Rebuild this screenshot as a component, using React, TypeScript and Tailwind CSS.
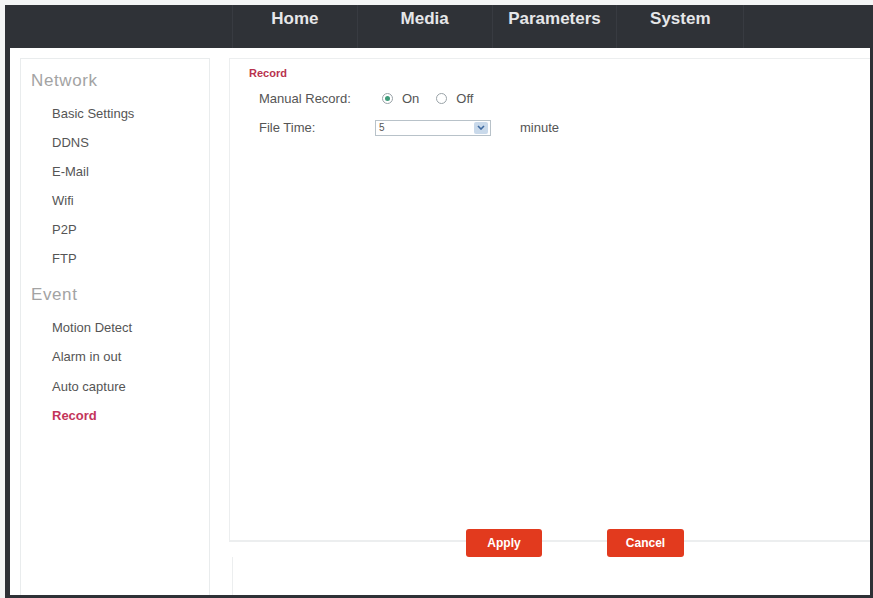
const navItems = [
  { label: 'Home', w: 'w-[126px]' },
  { label: 'Media', w: 'w-[136px]' },
  { label: 'Parameters', w: 'w-[126px]' },
  { label: 'System', w: 'w-[128px]' },
];

const networkItems = ['Basic Settings', 'DDNS', 'E-Mail', 'Wifi', 'P2P', 'FTP'];
const eventItems = ['Motion Detect', 'Alarm in out', 'Auto capture', 'Record'];

function Radio({ checked }: { checked?: boolean }) {
  return (
    <span className="flex h-[11px] w-[11px] items-center justify-center rounded-full border border-[#9aa3a8] bg-white">
      {checked && <span className="h-[5px] w-[5px] rounded-full bg-[#3f9c7a]" />}
    </span>
  );
}

export default function App() {
  return (
    <div
      className="h-[598px] w-[873px] overflow-hidden bg-[#f4f5f5] pt-[5px]"
      style={{ fontFamily: '"Liberation Sans", Arial, sans-serif' }}
    >
      <div className="ml-[5px] flex h-[593px] w-[868px] flex-col border-b-[3px] border-l-[5px] border-r-[3px] border-[#2e3136] bg-white">
        {/* top nav */}
        <div className="flex h-[43px] shrink-0 bg-[#2f3237] pl-[222px]">
          {navItems.map((item) => (
            <div
              key={item.label}
              className={`${item.w} flex justify-center border-l border-[#383b41] pt-[4px] text-[17px] font-bold leading-[20px] text-[#e6e7e9]`}
            >
              {item.label}
            </div>
          ))}
          <div className="w-[128px] border-l border-[#383b41]" />
        </div>

        <div className="flex flex-1 pt-[10px]">
          {/* sidebar */}
          <div className="ml-[10px] w-[190px] border-x border-t border-[#e9eced] pl-[10px] pt-[11px]">
            <div className="text-[17px] leading-[22px] tracking-[0.6px] text-[#a3a3a3]">Network</div>
            <div className="mt-[14px] flex flex-col gap-[14px] pl-[21px] text-[13px] text-[#555]">
              {networkItems.map((i) => (
                <div key={i} className="leading-[15px]">{i}</div>
              ))}
            </div>
            <div className="mt-[18px] text-[17px] leading-[22px] tracking-[0.6px] text-[#a3a3a3]">Event</div>
            <div className="mt-[14px] flex flex-col gap-[14.4px] pl-[21px] text-[13px] text-[#555]">
              {eventItems.map((i) => (
                <div
                  key={i}
                  className={i === 'Record' ? 'font-bold leading-[15px] text-[#c4355a]' : 'leading-[15px]'}
                >
                  {i}
                </div>
              ))}
            </div>
          </div>

          {/* main */}
          <div className="ml-[19px] flex flex-1 flex-col">
            <div className="h-[484px] border-b-2 border-l border-t border-[#eceeef] pl-[19px] pt-[6px]">
              <div className="text-[11px] font-bold text-[#b8334e]">Record</div>
              <div className="mt-[7px] flex items-center pl-[10px] text-[13px] text-[#555]">
                <span className="w-[123px]">Manual Record:</span>
                <Radio checked />
                <span className="ml-[9px]">On</span>
                <span className="ml-[17px]"><Radio /></span>
                <span className="ml-[9px]">Off</span>
              </div>
              <div className="mt-[10px] flex items-center pl-[10px] text-[13px] text-[#555]">
                <span className="w-[116px]">File Time:</span>
                <div className="flex h-[16px] w-[116px] items-center justify-between border border-[#b8c2c9] bg-white pl-[3px] pr-[2px] text-[10px]">
                  <span>5</span>
                  <span className="flex h-[12px] w-[14px] items-center justify-center rounded-[2px] bg-[#c9d9ea]">
                    <svg width="8" height="5" viewBox="0 0 8 5">
                      <path d="M1 1l3 3 3-3" fill="none" stroke="#3f6aa0" strokeWidth="1.6" />
                    </svg>
                  </span>
                </div>
                <span className="ml-[29px]">minute</span>
              </div>
            </div>
            <div className="-mt-[13px] flex pl-[237px]">
              <button className="h-[28px] w-[76px] rounded-[3px] bg-[#e23a1e] text-[12px] font-bold text-white">
                Apply
              </button>
              <button className="ml-[65px] h-[28px] w-[77px] rounded-[3px] bg-[#e23a1e] text-[12px] font-bold text-white">
                Cancel
              </button>
            </div>
            <div className="ml-[3px] flex-1 border-l border-[#eceeef]" />
          </div>
        </div>
      </div>
    </div>
  );
}
